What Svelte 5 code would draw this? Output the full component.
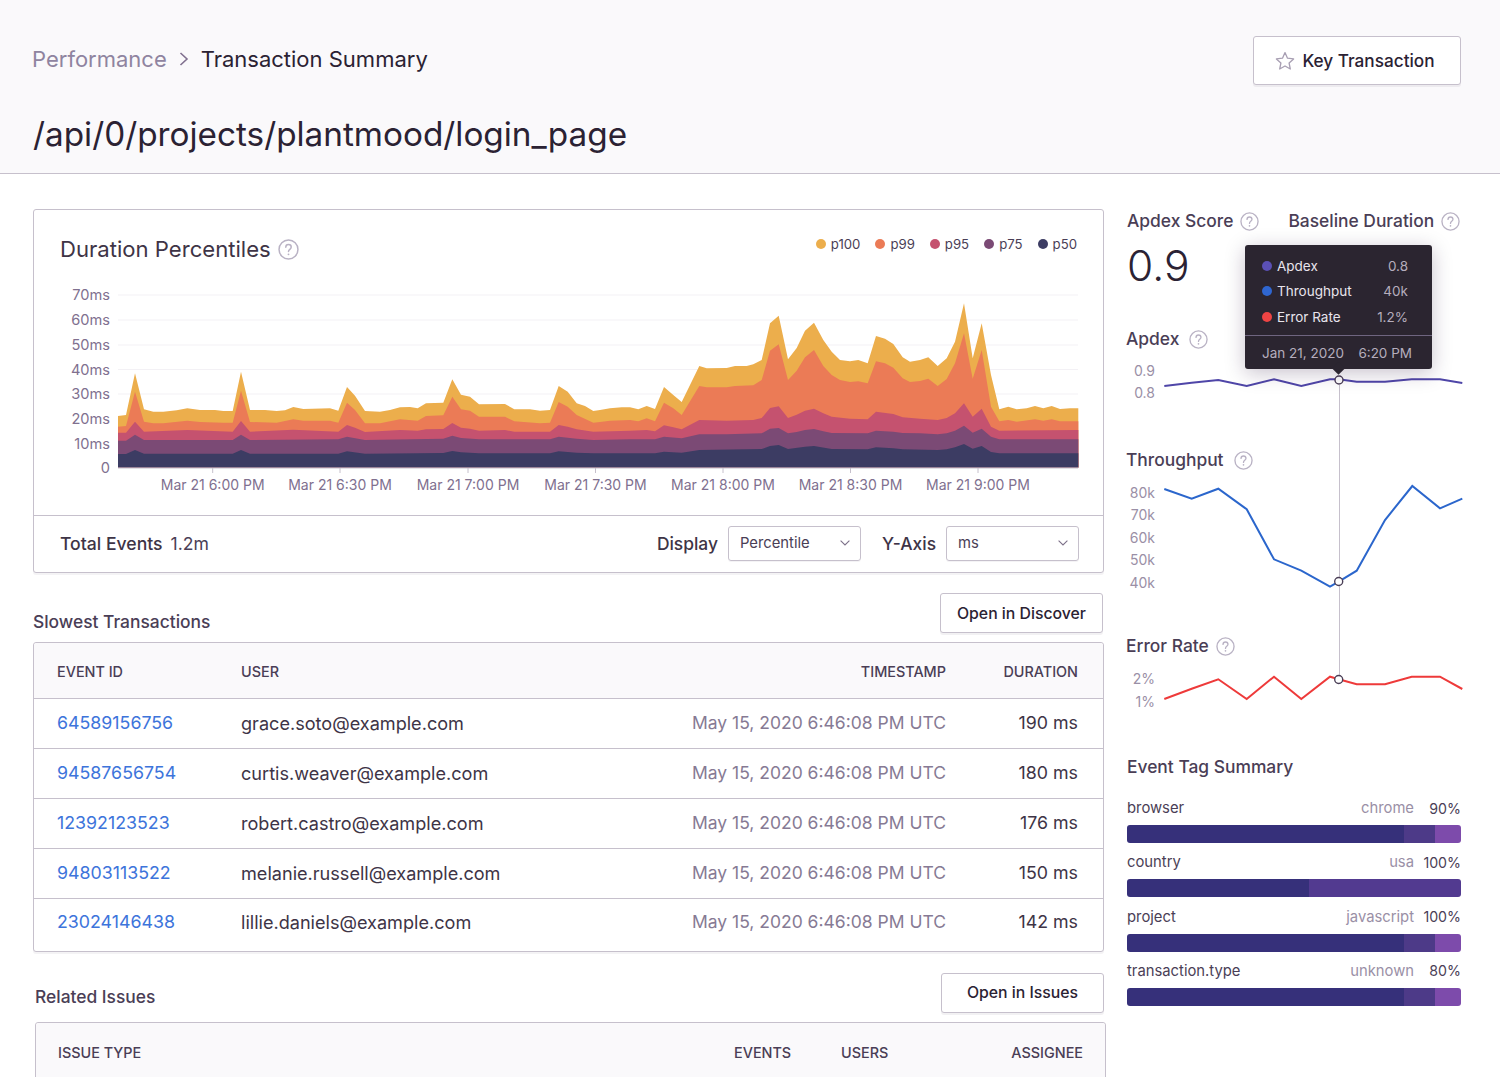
<script>
	// points traced from the chart, left half and right half have different origins
	const L = (pts) => pts.map(([x, y]) => [100 + x / 3, 280 + y / 3]);
	const R = (pts) => pts.map(([x, y]) => [590 + x / 3, 280 + y / 3]);

	const layers = [
		{
			color: '#ecae4c',
			pts: [
				...L([[54,408],[78,405],[105,280],[132,388],[160,395],[190,395],[230,391],[262,385],[300,390],[345,390],[370,393],[398,393],[423,275],[450,390],[495,390],[530,393],[555,391],[580,381],[610,387],[690,385],[715,392],[741,321],[765,347],[795,393],[840,395],[870,390],[900,382],[930,381],[953,385],[978,370],[1030,368],[1057,298],[1083,344],[1110,350],[1137,373],[1215,372],[1243,388],[1290,388],[1320,392],[1350,390],[1376,318],[1403,335],[1430,370],[1455,378],[1480,393]]),
				...R([[30,390],[60,385],[95,382],[120,382],[145,388],[170,378],[195,387],[222,321],[250,345],[275,366],[328,258],[350,265],[410,264],[435,258],[470,258],[490,253],[515,240],[540,130],[566,107],[594,238],[620,204],[645,152],[672,128],[700,180],[725,215],[750,240],[780,244],[805,240],[833,250],[858,168],[885,176],[910,192],[938,232],[960,245],[990,240],[1015,232],[1043,258],[1070,235],[1095,185],[1122,70],[1148,235],[1175,130],[1203,285],[1228,388],[1255,380],[1280,388],[1310,385],[1335,378],[1360,385],[1385,378],[1410,387],[1440,385],[1465,385]])
			]
		},
		{
			color: '#eb7b56',
			pts: [
				...L([[54,440],[78,438],[105,335],[132,425],[160,430],[190,430],[262,422],[300,426],[370,428],[398,428],[423,332],[450,426],[530,428],[580,418],[610,422],[690,422],[715,428],[741,368],[765,390],[795,430],[840,430],[900,418],[953,422],[978,408],[1030,406],[1057,350],[1083,388],[1110,392],[1137,410],[1215,410],[1243,424],[1320,430],[1350,428],[1376,366],[1403,380],[1430,405],[1480,428]]),
				...R([[30,426],[60,422],[120,420],[145,424],[170,415],[195,424],[222,368],[250,385],[275,405],[328,318],[350,322],[410,322],[435,318],[490,316],[515,300],[540,212],[566,193],[594,300],[620,272],[645,232],[672,210],[700,258],[725,285],[750,300],[780,306],[805,304],[833,310],[858,244],[885,250],[910,263],[938,295],[960,306],[990,303],[1015,296],[1043,318],[1070,297],[1095,250],[1122,160],[1148,296],[1175,210],[1203,380],[1228,424],[1255,420],[1280,425],[1335,418],[1360,422],[1385,418],[1410,424],[1465,424]])
			]
		},
		{
			color: '#c5526f',
			pts: [
				...L([[54,458],[78,458],[105,425],[132,455],[262,450],[398,455],[423,423],[450,455],[580,449],[715,455],[741,435],[765,443],[795,456],[900,450],[953,452],[978,448],[1030,447],[1057,429],[1083,443],[1110,446],[1137,452],[1215,450],[1243,455],[1350,455],[1376,435],[1403,440],[1430,448],[1480,455]]),
				...R([[120,452],[170,450],[195,454],[222,436],[250,442],[275,448],[328,420],[410,422],[490,420],[515,414],[540,384],[566,379],[594,414],[620,404],[645,392],[672,386],[700,400],[725,410],[780,416],[833,418],[858,395],[910,402],[938,412],[990,416],[1043,420],[1070,414],[1095,400],[1122,370],[1148,410],[1175,386],[1203,440],[1228,452],[1465,450]])
			]
		},
		{
			color: '#7b4a75',
			pts: [
				...L([[54,482],[78,482],[105,464],[132,480],[398,480],[423,464],[450,480],[715,478],[741,470],[795,480],[1030,476],[1057,467],[1083,474],[1137,478],[1350,478],[1376,470],[1430,476],[1480,480]]),
				...R([[120,478],[195,478],[222,470],[275,475],[328,463],[410,463],[515,460],[540,446],[566,444],[594,460],[620,456],[645,450],[672,447],[700,454],[725,459],[833,460],[858,452],[910,455],[938,459],[990,460],[1043,463],[1070,460],[1095,452],[1122,437],[1148,458],[1175,446],[1203,470],[1228,478],[1465,478]])
			]
		},
		{
			color: '#3c3c63',
			pts: [
				...L([[54,522],[78,522],[105,510],[132,521],[398,521],[423,510],[450,521],[715,521],[741,514],[795,521],[1030,519],[1057,513],[1083,517],[1137,520],[1350,520],[1376,514],[1430,518],[1480,520]]),
				...R([[120,520],[195,520],[222,515],[275,518],[328,510],[515,507],[540,498],[566,495],[594,507],[645,500],[672,498],[725,507],[833,508],[858,502],[910,505],[938,508],[1043,510],[1070,508],[1095,502],[1122,492],[1148,506],[1175,498],[1203,516],[1228,520],[1465,520]])
			]
		}
	];
	const base = 467.5;
	const area = (pts) =>
		`M${pts[0][0]} ${base} ` + pts.map((p) => `L${p[0].toFixed(1)} ${p[1].toFixed(1)}`).join(' ') + ` L${pts[pts.length - 1][0].toFixed(1)} ${base} Z`;

	const legend = [
		['p100', '#ecae4c'],
		['p99', '#eb7b56'],
		['p95', '#c5526f'],
		['p75', '#7b4a75'],
		['p50', '#3c3c63']
	];
	const yTicks = [['70ms', 295], ['60ms', 320], ['50ms', 345], ['40ms', 369.5], ['30ms', 394], ['20ms', 419], ['10ms', 444]];
	const xTicks = [['Mar 21 6:00 PM', 212.7], ['Mar 21 6:30 PM', 340], ['Mar 21 7:00 PM', 468], ['Mar 21 7:30 PM', 595.5], ['Mar 21 8:00 PM', 723], ['Mar 21 8:30 PM', 850.5], ['Mar 21 9:00 PM', 978]];

	const rows = [
		['64589156756', 'grace.soto@example.com', '190 ms'],
		['94587656754', 'curtis.weaver@example.com', '180 ms'],
		['12392123523', 'robert.castro@example.com', '176 ms'],
		['94803113522', 'melanie.russell@example.com', '150 ms'],
		['23024146438', 'lillie.daniels@example.com', '142 ms']
	];

	const tags = [
		{ name: 'browser', value: 'chrome', pct: '90%', segs: [277, 31, 26], cols: ['#36307a', '#4d3a88', '#7d4bab'] },
		{ name: 'country', value: 'usa', pct: '100%', segs: [182, 152], cols: ['#36307a', '#523a90'] },
		{ name: 'project', value: 'javascript', pct: '100%', segs: [277, 31, 26], cols: ['#36307a', '#4d3a88', '#7d4bab'] },
		{ name: 'transaction.type', value: 'unknown', pct: '80%', segs: [277, 31, 26], cols: ['#36307a', '#4d3a88', '#7d4bab'] }
	];

	// sparkline x is page x, y is relative to the top of each svg
	const line = (pts, top) => pts.map(([x, y]) => `${(1110 + x / 3 - 1126).toFixed(1)},${(y - top).toFixed(1)}`).join(' ');
	const apdex = line([[163,558],[245,548],[325,540],[410,558],[492,538],[574,558],[660,538],[686,538],[740,545],[825,545],[905,538],[990,538],[1057,549]].map(([x, y]) => [x, 200 + y / 3]), 358);
	const throughput = line([[163,147],[245,176],[325,146],[410,208],[492,358],[574,392],[660,440],[686,425],[740,392],[825,240],[907,138],[990,205],[1057,176]].map(([x, y]) => [x, 440 + y / 3]), 480);
	const errors = line([[163,777],[245,746],[325,718],[410,777],[492,710],[574,777],[660,710],[686,718],[740,733],[825,733],[905,710],[990,710],[1057,747]].map(([x, y]) => [x, 440 + y / 3]), 667);
</script>

{#snippet help(size)}
	<svg class="help" width={size} height={size} viewBox="0 0 20 20" fill="none">
		<circle cx="10" cy="10" r="9" stroke="#b9b2c4" stroke-width="1.4" />
		<path d="M7.4 7.8c0-1.5 1.2-2.5 2.6-2.5s2.6 1 2.6 2.4c0 2.2-2.6 2.1-2.6 4.3" stroke="#b9b2c4" stroke-width="1.4" stroke-linecap="round" />
		<circle cx="10" cy="14.6" r="0.9" fill="#b9b2c4" />
	</svg>
{/snippet}

{#snippet chevron()}
	<svg width="10" height="6" viewBox="0 0 10 6" fill="none">
		<path d="M0.6 0.6 5 5 9.4 0.6" stroke="#7d7189" stroke-width="1.1" />
	</svg>
{/snippet}

<div class="page">
	<header>
		<div class="head-top">
			<nav class="crumbs">
				<span class="crumb-link">Performance</span>
				<svg width="10" height="14" viewBox="0 0 10 14" fill="none">
					<path d="M1.5 1 8 7 1.5 13" stroke="#80708f" stroke-width="1.6" />
				</svg>
				<span>Transaction Summary</span>
			</nav>
			<button class="btn key">
				<svg width="20" height="20" viewBox="0 0 20 20" fill="none">
					<path d="M10 1.6l2.5 5.6 6.1.7-4.5 4.1 1.2 6-5.3-3-5.3 3 1.2-6-4.5-4.1 6.1-.7z" stroke="#a89fb3" stroke-width="1.3" stroke-linejoin="round" />
				</svg>
				Key Transaction
			</button>
		</div>
		<h1>/api/0/projects/plantmood/login_page</h1>
	</header>

	<main>
		<div class="left">
			<section class="card chart-card">
				<div class="chart-head">
					<h2>Duration Percentiles {@render help(21)}</h2>
					<ul class="legend">
						{#each legend as [label, color]}
							<li><i style="background: {color}"></i>{label}</li>
						{/each}
					</ul>
				</div>
				<svg class="chart" width="1069" height="235" viewBox="34 280 1069 235">
					{#each yTicks as [label, y]}
						<line x1="118" x2="1078" y1={y} y2={y} stroke="#f3f1f5" stroke-width="1.2" />
						<text x="110" y={y + 5} text-anchor="end">{label}</text>
					{/each}
					<text x="110" y="473" text-anchor="end">0</text>
					{#each layers as layer}
						<path d={area(layer.pts)} fill={layer.color} />
					{/each}
					<line x1="118" x2="1078" y1="468" y2="468" stroke="#c6c0cc" />
					{#each xTicks as [label, x]}
						<line x1={x} x2={x} y1="468" y2="473" stroke="#c6c0cc" />
						<text class="xl" {x} y="490" text-anchor="middle">{label}</text>
					{/each}
				</svg>
				<div class="chart-foot">
					<div class="total"><b>Total Events</b> <span>1.2m</span></div>
					<div class="controls">
						<b>Display</b>
						<div class="select">Percentile {@render chevron()}</div>
						<b class="gap">Y-Axis</b>
						<div class="select">ms {@render chevron()}</div>
					</div>
				</div>
			</section>

			<div class="section-head">
				<h3>Slowest Transactions</h3>
				<button class="btn small">Open in Discover</button>
			</div>
			<section class="card table">
				<div class="tr th events">
					<span>EVENT ID</span><span>USER</span><span class="right">TIMESTAMP</span><span class="right">DURATION</span>
				</div>
				{#each rows as [id, user, duration]}
					<div class="tr events">
						<span class="link">{id}</span>
						<span class="user">{user}</span>
						<span class="right muted">May 15, 2020 6:46:08 PM UTC</span>
						<span class="right">{duration}</span>
					</div>
				{/each}
			</section>

			<div class="related">
				<div class="section-head">
					<h3>Related Issues</h3>
					<button class="btn small issues">Open in Issues</button>
				</div>
				<section class="card table">
					<div class="tr th issue-row">
						<span>ISSUE TYPE</span><span class="right">EVENTS</span><span class="users">USERS</span><span class="right">ASSIGNEE</span>
					</div>
				</section>
			</div>
		</div>

		<aside>
			<div class="stats">
				<div>
					<h4>Apdex Score {@render help(19)}</h4>
					<div class="score">0.9</div>
				</div>
				<div><h4>Baseline Duration {@render help(19)}</h4></div>
			</div>

			<div class="trends">
				<div class="crosshair"></div>

				<h4 class="t1 wide">Apdex {@render help(19)}</h4>
				<svg class="spark s1" width="336" height="42" viewBox="0 0 336 42">
					<text x="29" y="18" text-anchor="end">0.9</text>
					<text x="29" y="40" text-anchor="end">0.8</text>
					<polyline points={apdex} stroke="#4f46a8" />
					<circle cx="213" cy="22" r="4" />
				</svg>

				<h4 class="t2 wide">Throughput {@render help(19)}</h4>
				<svg class="spark s2" width="336" height="116" viewBox="0 0 336 116">
					<text x="29" y="18" text-anchor="end">80k</text>
					<text x="29" y="40" text-anchor="end">70k</text>
					<text x="29" y="63" text-anchor="end">60k</text>
					<text x="29" y="85" text-anchor="end">50k</text>
					<text x="29" y="108" text-anchor="end">40k</text>
					<polyline points={throughput} stroke="#2b66cc" />
					<circle cx="212.7" cy="101.5" r="4" />
				</svg>

				<h4 class="t3">Error Rate {@render help(19)}</h4>
				<svg class="spark s3" width="336" height="46" viewBox="0 0 336 46">
					<text x="29" y="17" text-anchor="end">2%</text>
					<text x="29" y="40" text-anchor="end">1%</text>
					<polyline points={errors} stroke="#ee3a3a" />
					<circle cx="212.7" cy="12.5" r="4" />
				</svg>
			</div>

			<h4 class="t4">Event Tag Summary</h4>
			<div class="tags">
				{#each tags as tag}
					<div class="tag">
						<div class="tag-row">
							<span class="tag-name">{tag.name}</span>
							<span class="tag-value">{tag.value}</span>
							<span class="tag-pct">{tag.pct}</span>
						</div>
						<div class="bar">
							{#each tag.segs as w, i}
								<span style="width: {w}px; background: {tag.cols[i]}"></span>
							{/each}
						</div>
					</div>
				{/each}
			</div>

			<div class="tooltip">
				<div class="tip-rows">
					<div class="tip-row"><i style="background: #5b50b5"></i>Apdex<em>0.8</em></div>
					<div class="tip-row"><i style="background: #2f66d0"></i>Throughput<em>40k</em></div>
					<div class="tip-row"><i style="background: #ee4444"></i>Error Rate<em>1.2%</em></div>
				</div>
				<div class="tip-foot"><span>Jan 21, 2020</span><span>6:20 PM</span></div>
			</div>
		</aside>
	</main>
</div>

<style>
	:global(body) {
		background: #fff;
		font-family: Inter, 'Noto Sans', sans-serif;
		color: #2b2233;
	}
	.page {
		height: 1077px;
		overflow: hidden;
	}
	header {
		height: 174px;
		box-sizing: border-box;
		background: #faf9fb;
		border-bottom: 1px solid #c6c0cc;
		padding: 36px 39px 0 32px;
	}
	.head-top {
		display: flex;
		justify-content: space-between;
		align-items: flex-start;
	}
	.crumbs {
		display: flex;
		align-items: center;
		gap: 12px;
		font-size: 22px;
		height: 46px;
	}
	.crumb-link {
		color: #8f84a0;
	}
	h1 {
		margin: 27px 0 0 1px;
		font-size: 33.3px;
		font-weight: 400;
		line-height: 44px;
		color: #2b2233;
	}
	.btn {
		display: inline-flex;
		align-items: center;
		justify-content: center;
		box-sizing: border-box;
		background: #fff;
		border: 1px solid #c6c0cc;
		border-radius: 3px;
		box-shadow: 0 2px 0 rgba(37, 11, 54, 0.06);
		font-family: inherit;
		font-weight: 500;
		color: #2b2233;
	}
	.key {
		width: 208px;
		height: 49px;
		gap: 7px;
		padding: 0 4px 0 0;
		font-size: 17.2px;
	}
	.small {
		width: 163px;
		height: 40px;
		font-size: 15.8px;
	}
	main {
		display: grid;
		grid-template-columns: 1071px 334px;
		gap: 23px;
		padding: 35px 0 0 33px;
	}
	.card {
		box-sizing: border-box;
		background: #fff;
		border: 1px solid #c6c0cc;
		border-radius: 3px;
		box-shadow: 0 2px 0 rgba(37, 11, 54, 0.05);
	}
	.chart-card {
		height: 364px;
	}
	.chart-head {
		height: 70px;
		display: flex;
		justify-content: space-between;
		padding: 0 26px;
		align-items: flex-start;
	}
	h2 {
		display: flex;
		align-items: center;
		gap: 7px;
		margin: 25px 0 0;
		font-size: 22.1px;
		font-weight: 400;
		line-height: 28px;
		color: #3e3446;
	}
	.legend {
		display: flex;
		gap: 15px;
		list-style: none;
		margin: 25px 0 0;
		padding: 0;
		font-size: 13.2px;
		line-height: 18px;
		color: #4a3e56;
	}
	.legend li {
		display: flex;
		align-items: center;
		gap: 5px;
	}
	.legend i {
		width: 10px;
		height: 10px;
		border-radius: 50%;
	}
	.chart {
		display: block;
	}
	.chart text {
		font-size: 14.6px;
		fill: #80708f;
	}
	.chart text.xl {
		font-size: 14px;
	}
	.chart-foot {
		height: 57px;
		box-sizing: border-box;
		border-top: 1px solid #c6c0cc;
		display: flex;
		align-items: center;
		justify-content: space-between;
		padding: 0 24px 2px 26px;
	}
	.total {
		font-size: 17.6px;
		display: flex;
		gap: 8px;
	}
	.total b,
	.controls b {
		font-weight: 500;
		color: #3e3446;
	}
	.total span {
		color: #4a3e56;
	}
	.controls {
		display: flex;
		align-items: center;
		gap: 10px;
		font-size: 17.4px;
	}
	.controls .gap {
		margin-left: 11px;
	}
	.select {
		width: 133px;
		height: 35px;
		box-sizing: border-box;
		display: flex;
		align-items: center;
		justify-content: space-between;
		padding: 0 10px 0 11px;
		border: 1px solid #c6c0cc;
		border-radius: 3px;
		box-shadow: 0 1px 0 rgba(37, 11, 54, 0.05);
		font-size: 14.8px;
		color: #4a3e56;
	}
	.section-head {
		display: flex;
		justify-content: space-between;
		align-items: flex-end;
		margin: 20px 1px 9px 0;
	}
	h3 {
		margin: 0 0 1px;
		font-size: 17.4px;
		font-weight: 500;
		line-height: 20px;
		color: #4a3e56;
	}
	.table {
		font-size: 17.8px;
	}
	.tr {
		display: grid;
		align-items: center;
		height: 50.1px;
		padding-bottom: 2px;
		padding-left: 23px;
		border-top: 1px solid #c6c0cc;
		box-sizing: border-box;
		color: #3e3446;
	}
	.events {
		grid-template-columns: 184px 1fr auto 157px;
	}
	.events .right:last-child {
		padding-right: 25px;
	}
	.user {
		font-size: 18.1px;
	}
	.muted {
		font-size: 17.5px;
		color: #867a94;
	}
	.th {
		height: 55px;
		border-top: 0;
		padding-top: 2px;
		padding-bottom: 0;
		background: #faf9fb;
		border-radius: 3px 3px 0 0;
		font-size: 14.4px;
		font-weight: 500;
		color: #4a3e56;
	}
	.tr:last-child:not(.th) {
		height: 52.6px;
		padding-bottom: 7px;
	}
	.right {
		text-align: right;
	}
	.link {
		color: #3d74db;
	}
	.related {
		margin: 21px -2px 0 2px;
	}
	.related .section-head {
		margin: 0 2px 9px 0;
	}
	.related h3 {
		margin-bottom: 6px;
	}
	.issue-row {
		grid-template-columns: 676px 57px 99px 193px;
		height: 80px;
		padding-left: 22px;
		align-items: start;
		padding-top: 21px;
	}
	.users {
		padding-left: 50px;
		white-space: nowrap;
	}
	aside {
		position: relative;
	}
	h4 {
		display: flex;
		align-items: center;
		gap: 7px;
		margin: 0;
		font-size: 17.4px;
		font-weight: 500;
		line-height: 24px;
		color: #4a3e56;
		white-space: nowrap;
	}
	h4.wide {
		gap: 10px;
	}
	.stats {
		display: flex;
		gap: 29px;
	}
	.score {
		margin-top: 10px;
		height: 46px;
		font-size: 42.5px;
		line-height: 46px;
		font-weight: 350;
		color: #2b2233;
	}
	.trends {
		position: relative;
		margin-left: -1px;
		width: 336px;
		padding-top: 38px;
	}
	.crosshair {
		position: absolute;
		left: 213px;
		top: 96px;
		height: 295px;
		width: 1px;
		background: #c6c0cc;
	}
	.t2 {
		margin-top: 48px;
	}
	.t3 {
		margin-top: 38px;
	}
	.t4 {
		margin-top: 42px;
	}
	.spark {
		display: block;
		position: relative;
		overflow: visible;
	}
	.s1 {
		margin-top: 7px;
	}
	.s2 {
		margin-top: 8px;
	}
	.s3 {
		margin-top: 9px;
	}
	.spark text {
		font-size: 14px;
		fill: #9a8fa6;
	}
	.spark polyline {
		fill: none;
		stroke-width: 2;
	}
	.spark circle {
		fill: #fff;
		stroke: #4a3e56;
		stroke-width: 1.4;
	}
	.tags {
		margin-top: 19px;
		display: flex;
		flex-direction: column;
		gap: 9.3px;
	}
	.tag-row {
		display: flex;
		align-items: center;
		height: 20px;
		font-size: 14.8px;
		color: #4a3e56;
	}
	.tag-value {
		margin-left: auto;
		color: #9a8fa6;
	}
	.tag-pct {
		width: 47px;
		text-align: right;
		font-size: 14.2px;
	}
	.bar {
		display: flex;
		height: 18px;
		margin-top: 7px;
		border-radius: 3px;
		overflow: hidden;
	}
	.tooltip {
		position: absolute;
		left: 118px;
		top: 36px;
		width: 187px;
		height: 124px;
		box-sizing: border-box;
		background: #2b2530;
		border-radius: 3px;
		box-shadow: 0 4px 20px rgba(37, 11, 54, 0.25);
		color: #e8e4ec;
		font-size: 13.5px;
	}
	.tooltip::after {
		content: '';
		position: absolute;
		left: 89px;
		bottom: -4px;
		width: 9px;
		height: 9px;
		background: #2b2530;
		transform: rotate(45deg);
	}
	.tip-rows {
		height: 91px;
		box-sizing: border-box;
		border-bottom: 1px solid #6f6580;
		padding: 8px 24px 0 17px;
	}
	.tip-row {
		display: flex;
		align-items: center;
		height: 25.5px;
	}
	.tip-row i {
		width: 10px;
		height: 10px;
		border-radius: 50%;
		margin-right: 5px;
	}
	.tip-row em {
		margin-left: auto;
		font-style: normal;
		color: #b5adbd;
	}
	.tip-foot {
		display: flex;
		justify-content: space-between;
		padding: 9px 20px 0 17px;
		color: #b5adbd;
	}
</style>
